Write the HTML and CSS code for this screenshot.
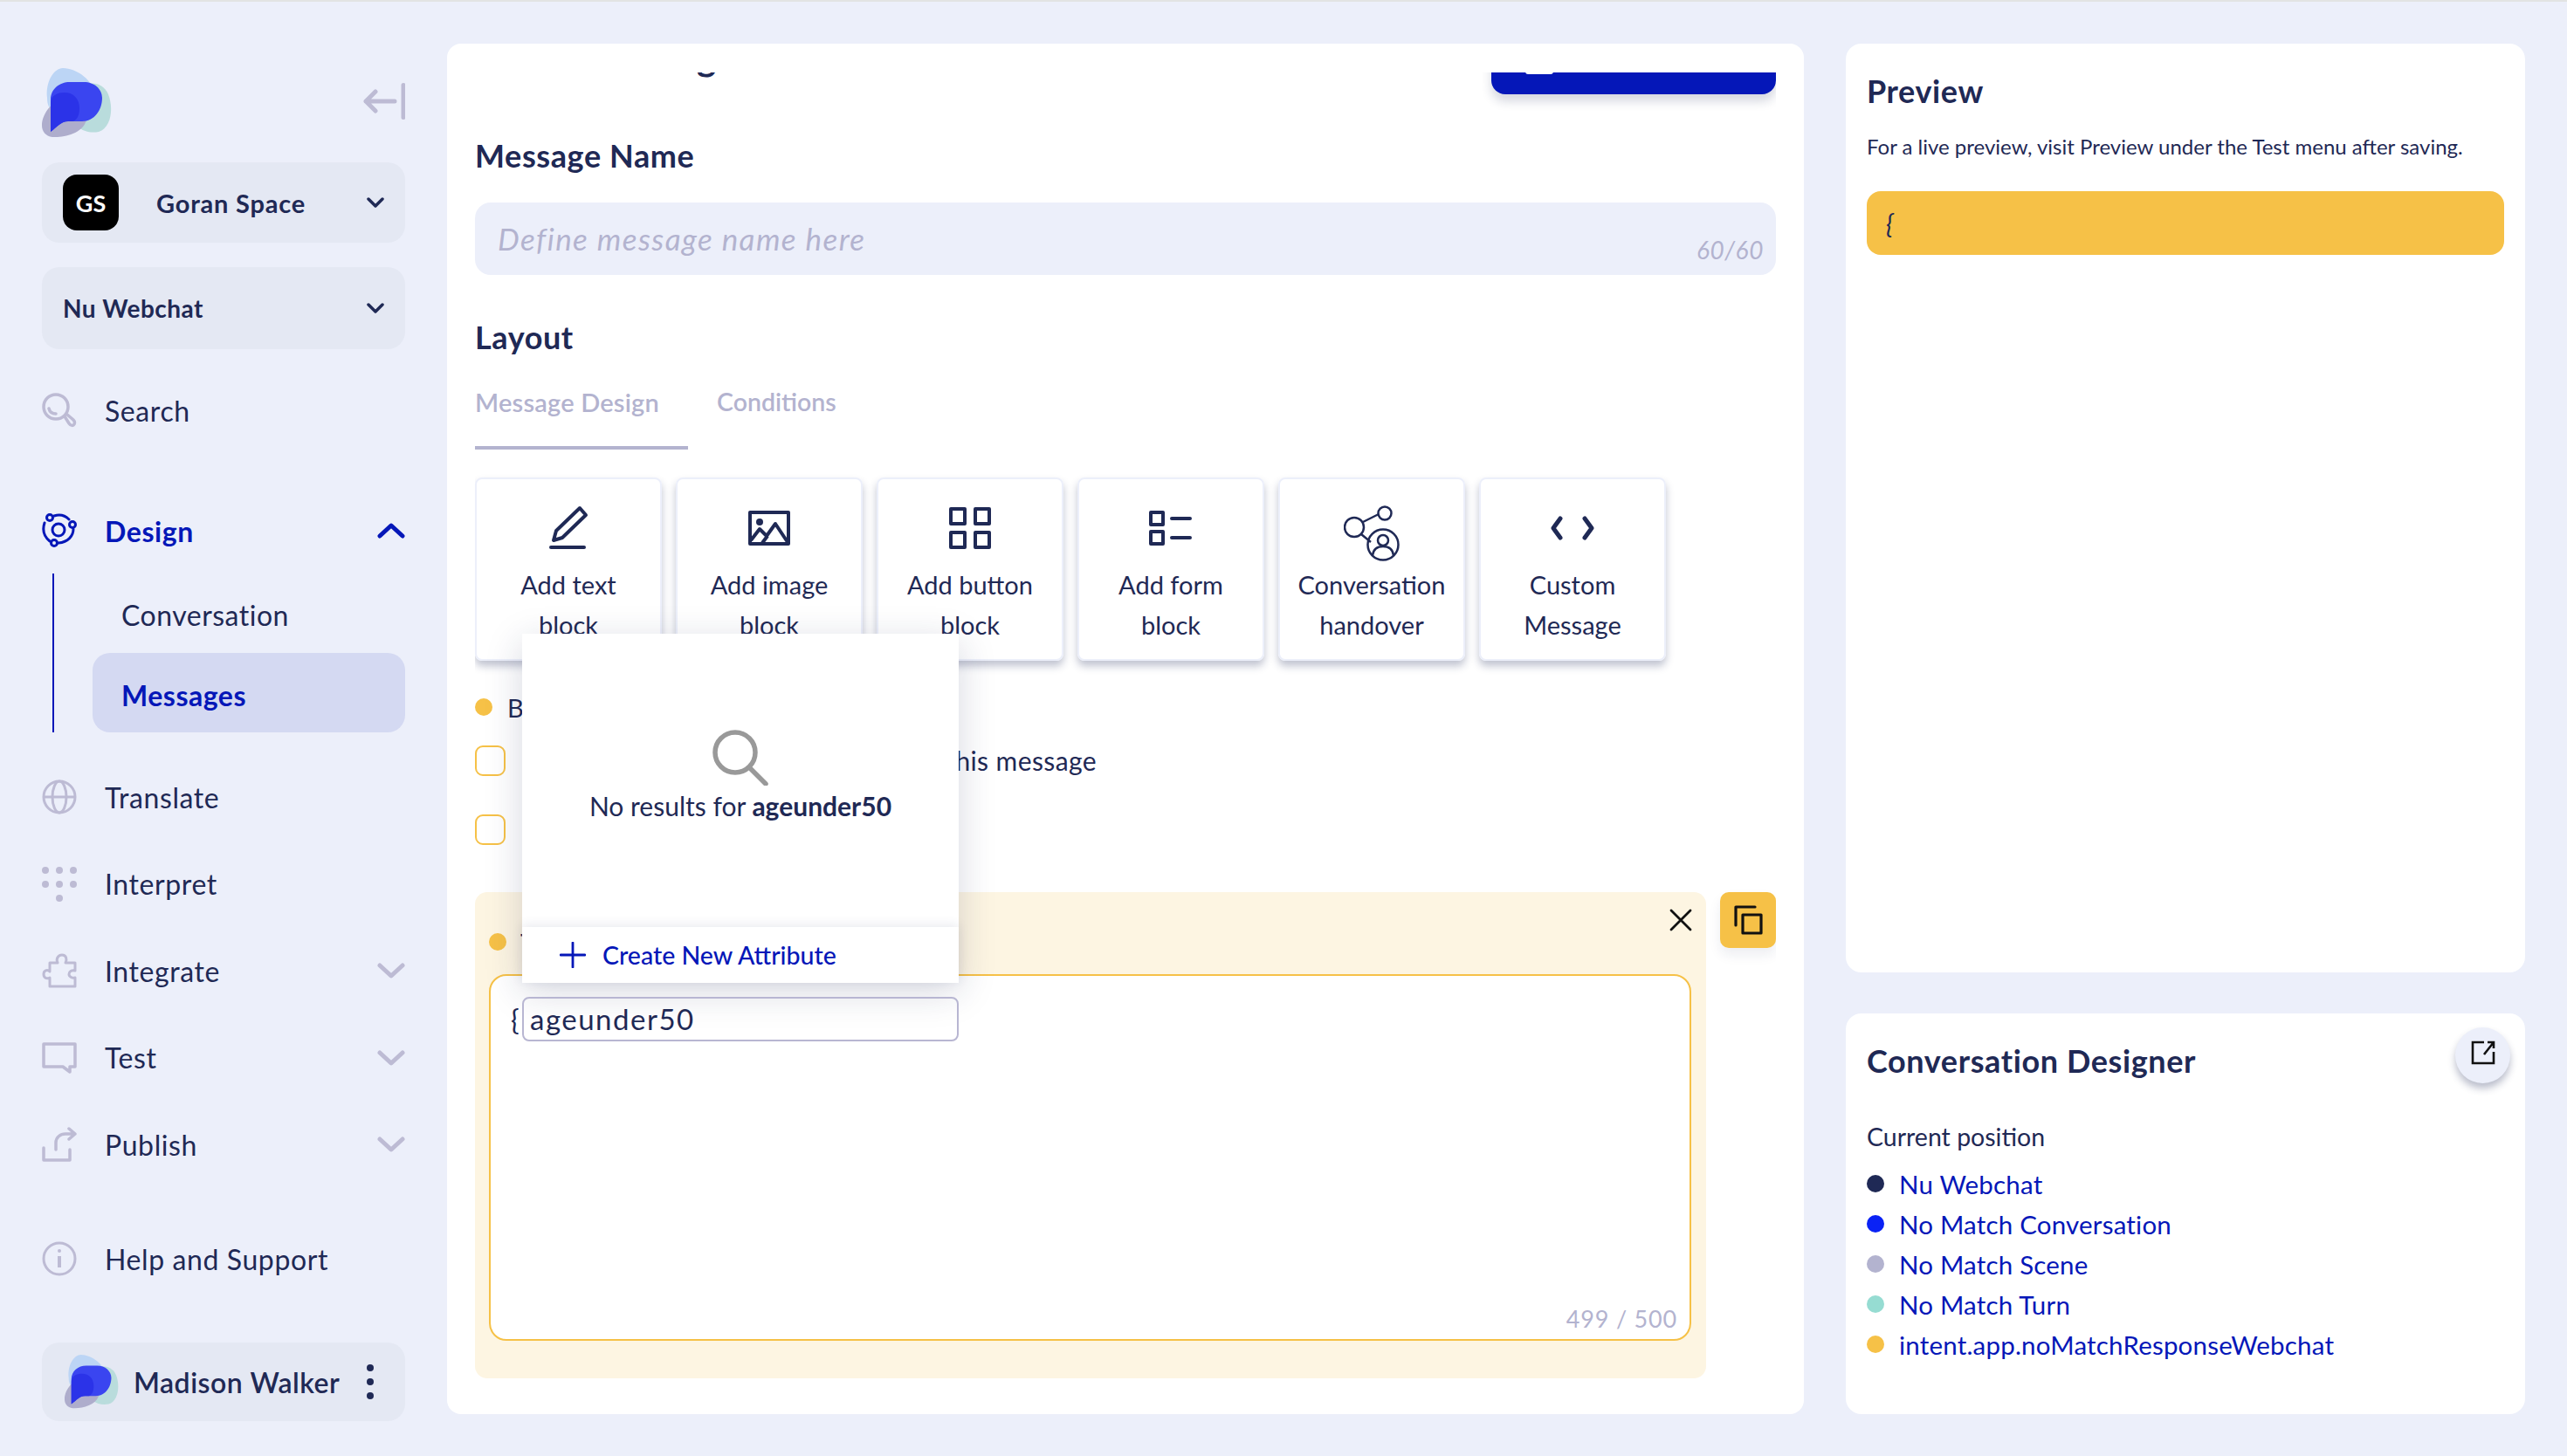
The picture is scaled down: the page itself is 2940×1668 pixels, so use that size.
FILE: index.html
```html
<!DOCTYPE html>
<html lang="en">
<head>
    <meta charset="UTF-8">
    <meta name="viewport" content="width=device-width, initial-scale=1.0">
    <title>Messages</title>
    <link rel="stylesheet" href="styles.css">
</head>
<body>
    <svg class="defs" width="0" height="0">
        <symbol id="logo" viewBox="0 0 80 80">
            <path fill="#bcd5f5" d="M6 34C4 15 14 0 24 0 40 0 60 15 60 30 60 48 30 55 15 50 8 47 6 42 6 34Z"/>
            <path fill="#b9dcdc" d="M40 20C55 15 70 16 76 30 82 45 80 68 65 73 50 76 35 68 32 50Z"/>
            <path fill="#aeadcc" d="M0 66C0 50 15 35 30 33 48 30 55 50 50 62 45 75 25 80 12 79 4 78 0 72 0 66Z"/>
            <path fill="#3a45f0" d="M10 73V36C10 24 20 16 32 16H48C60 16 69 24 69 34 69 48 60 61 46 61H30C22 61 18 67 10 73Z"/>
            <path fill="#2b33e8" d="M10 73V40C10 31 18 28 26 28 36 28 43 35 43 46 43 54 40 61 34 61H30C22 61 18 67 10 73Z"/>
        </symbol>
    </svg>

    <aside class="sidebar">
        <div class="brand">
            <svg class="brand-logo"><use href="#logo"/></svg>
            <svg class="collapse" viewBox="0 0 48 42" fill="none" stroke="#bdbbd4" stroke-width="5" stroke-linecap="round" stroke-linejoin="round">
                <path d="M46 2.500V39.500M36 21H3M14 10 3 21 14 32"/>
            </svg>
        </div>

        <div class="pill pill-space">
            <span class="avatar-gs">GS</span>
            <span class="pill-text">Goran Space</span>
            <svg class="pill-chevron" viewBox="0 0 20 12" fill="none" stroke="#1f2955" stroke-width="3.500" stroke-linecap="round" stroke-linejoin="round"><path d="M2 2l8 8 8-8"/></svg>
        </div>

        <div class="pill pill-project">
            <span class="pill-text">Nu Webchat</span>
            <svg class="pill-chevron" viewBox="0 0 20 12" fill="none" stroke="#1f2955" stroke-width="3.500" stroke-linecap="round" stroke-linejoin="round"><path d="M2 2l8 8 8-8"/></svg>
        </div>

        <div class="nav-row nav-search">
            <svg class="nav-icon" viewBox="0 0 40 40" fill="none" stroke="#bdbbd4" stroke-width="3.500" stroke-linecap="round">
                <circle cx="16" cy="16" r="14"/><path d="M8 18c1 4 4 6 8 6"/><path d="M26 27l5 8c2 3 5 3 6 1s1-3-1-5l-7-6"/>
            </svg>
            <span>Search</span>
        </div>

        <div class="nav-row nav-design">
            <svg class="nav-icon" viewBox="0 0 40 40" fill="none" stroke="#0517b8" stroke-width="3" stroke-linecap="round">
                <circle cx="19" cy="19" r="7"/><circle cx="9" cy="5" r="3.500"/><circle cx="35" cy="13" r="3.500"/><circle cx="14" cy="34" r="3.500"/>
                <path d="M14 3c6-2 12-1 17 4M36 18c0 8-6 15-17 16M9 32C3 27 0 20 3 11"/>
            </svg>
            <span>Design</span>
            <svg class="nav-chevron" viewBox="0 0 32 18" fill="none" stroke="#0517b8" stroke-width="5" stroke-linecap="round" stroke-linejoin="round"><path d="M3 15 16 3l13 12"/></svg>
        </div>

        <div class="subnav">
            <div class="subnav-item">Conversation</div>
            <div class="subnav-item subnav-active">Messages</div>
        </div>

        <div class="nav-group">
            <div class="nav-row">
                <svg class="nav-icon" viewBox="0 0 40 40" fill="none" stroke="#bdbbd4" stroke-width="3">
                    <circle cx="20" cy="20" r="18"/><ellipse cx="20" cy="20" rx="8" ry="18"/><path d="M2 20h36"/>
                </svg>
                <span>Translate</span>
            </div>
            <div class="nav-row">
                <svg class="nav-icon" viewBox="0 0 40 40" fill="#bdbbd4">
                    <circle cx="4" cy="4" r="4"/><circle cx="20" cy="4" r="4"/><circle cx="36" cy="4" r="4"/>
                    <circle cx="4" cy="20" r="4"/><circle cx="20" cy="20" r="4"/><circle cx="36" cy="20" r="4"/>
                    <circle cx="20" cy="36" r="4"/>
                </svg>
                <span>Interpret</span>
            </div>
            <div class="nav-row">
                <svg class="nav-icon" viewBox="0 0 40 40" fill="none" stroke="#bdbbd4" stroke-width="3" stroke-linejoin="round">
                    <path d="M9 38V28C5 30 2 28 2 24s4-6 7-3V11h9c-2-4 0-9 5-9s6 5 4 9h11v9c-4-1-7 1-7 4s4 5 7 4v10Z"/>
                </svg>
                <span>Integrate</span>
                <svg class="nav-chevron" viewBox="0 0 32 18" fill="none" stroke="#bdbbd4" stroke-width="5" stroke-linecap="round" stroke-linejoin="round"><path d="M3 3l13 12L29 3"/></svg>
            </div>
            <div class="nav-row">
                <svg class="nav-icon" viewBox="0 0 40 36" fill="none" stroke="#bdbbd4" stroke-width="3.500" stroke-linejoin="round">
                    <path d="M2 2h36v26h-6v6l-8-6H2Z"/>
                </svg>
                <span>Test</span>
                <svg class="nav-chevron" viewBox="0 0 32 18" fill="none" stroke="#bdbbd4" stroke-width="5" stroke-linecap="round" stroke-linejoin="round"><path d="M3 3l13 12L29 3"/></svg>
            </div>
            <div class="nav-row">
                <svg class="nav-icon" viewBox="0 0 40 40" fill="none" stroke="#bdbbd4" stroke-width="3.500" stroke-linecap="round" stroke-linejoin="round">
                    <path d="M2 24v14h30v-12M16 26V18c0-6 5-10 11-10h10M31 2l7 6-7 6"/>
                </svg>
                <span>Publish</span>
                <svg class="nav-chevron" viewBox="0 0 32 18" fill="none" stroke="#bdbbd4" stroke-width="5" stroke-linecap="round" stroke-linejoin="round"><path d="M3 3l13 12L29 3"/></svg>
            </div>
        </div>

        <div class="nav-row nav-help">
            <svg class="nav-icon" viewBox="0 0 40 40" fill="none" stroke="#bdbbd4" stroke-width="3">
                <circle cx="20" cy="20" r="18"/><path d="M20 17v13" stroke-width="4"/><circle cx="20" cy="11" r="2" fill="#bdbbd4" stroke="none"/>
            </svg>
            <span>Help and Support</span>
        </div>

        <div class="pill pill-user">
            <svg class="user-logo"><use href="#logo"/></svg>
            <span class="user-name">Madison Walker</span>
            <span class="kebab"><i></i><i></i><i></i></span>
        </div>
    </aside>

    <main class="editor">
        <div class="editor-scroll">
            <div class="editor-head">
                <h1>Create Message</h1>
                <button class="save-button">
                    <svg viewBox="0 0 32 32" fill="#fff"><rect width="32" height="32" rx="3"/></svg>
                    <span>Save Message</span>
                </button>
            </div>

            <h2 class="section-title">Message Name</h2>
            <div class="name-input">
                <span class="name-placeholder">Define message name here</span>
                <span class="name-count">60/60</span>
            </div>

            <h2 class="section-title layout-title">Layout</h2>
            <div class="tabs">
                <div class="tab tab-active">Message Design</div>
                <div class="tab">Conditions</div>
            </div>

            <div class="blocks">
                <div class="block">
                    <svg class="block-icon" viewBox="0 0 60 64" fill="none" stroke="#1f2955" stroke-width="4" stroke-linecap="round" stroke-linejoin="round">
                        <path d="M13 40l3-11L43 3l7 8-27 26Z"/><path d="M10 48h38"/>
                    </svg>
                    <div>Add text<br>block</div>
                </div>
                <div class="block">
                    <svg class="block-icon" viewBox="0 0 60 64" fill="none" stroke="#1f2955" stroke-width="4" stroke-linejoin="round">
                        <rect x="8" y="8" width="44" height="36"/><circle cx="19" cy="19" r="4" fill="#1f2955" stroke="none"/><path d="M9 40 19 27l8 8 10-14 14 21M22 43l6-8"/>
                    </svg>
                    <div>Add image<br>block</div>
                </div>
                <div class="block">
                    <svg class="block-icon" viewBox="0 0 60 64" fill="none" stroke="#1f2955" stroke-width="4" stroke-linejoin="round">
                        <rect x="8" y="4" width="16" height="17"/><rect x="36" y="4" width="16" height="17"/><rect x="8" y="31" width="16" height="17"/><rect x="36" y="31" width="16" height="17"/>
                    </svg>
                    <div>Add button<br>block</div>
                </div>
                <div class="block">
                    <svg class="block-icon" viewBox="0 0 60 64" fill="none" stroke="#1f2955" stroke-width="4" stroke-linecap="round" stroke-linejoin="round">
                        <rect x="7" y="8" width="14" height="14"/><rect x="7" y="30" width="14" height="14"/><path d="M31 15h21M31 37h21"/>
                    </svg>
                    <div>Add form<br>block</div>
                </div>
                <div class="block">
                    <svg class="block-icon icon-handover" viewBox="0 0 64 64" fill="none" stroke="#1f2955" stroke-width="2.500">
                        <circle cx="12" cy="25" r="11"/><circle cx="47" cy="9" r="7.500"/><circle cx="45" cy="45" r="17.500"/>
                        <path d="M22 19l18-9M20 33l11 9"/><circle cx="45" cy="40" r="6"/><path d="M33 57c1-7 6-10 12-10s11 3 12 10"/>
                    </svg>
                    <div>Conversation<br>handover</div>
                </div>
                <div class="block">
                    <svg class="block-icon" viewBox="0 0 60 64" fill="none" stroke="#1f2955" stroke-width="5" stroke-linecap="round" stroke-linejoin="round">
                        <path d="M16 15 8 26l8 11M44 15l8 11-8 11"/>
                    </svg>
                    <div>Custom<br>Message</div>
                </div>
            </div>

            <div class="option-title"><span class="dot dot-yellow"></span>Behavior</div>
            <div class="option-row">
                <span class="checkbox"></span>
                <span class="option-label">Do not send the response of this message</span>
            </div>
            <div class="option-row option-row-second">
                <span class="checkbox"></span>
            </div>

            <div class="text-row">
                <div class="text-panel">
                    <div class="text-panel-head">
                        <span class="dot dot-yellow"></span>
                        <span class="text-panel-title">Text</span>
                        <svg class="close-icon" viewBox="0 0 26 26" fill="none" stroke="#111" stroke-width="2.800" stroke-linecap="round"><path d="M2 2l22 22M24 2 2 24"/></svg>
                    </div>
                    <div class="text-area">
                        <div class="text-value">{</div>
                        <div class="text-count">499 / 500</div>
                    </div>
                </div>
                <button class="copy-button">
                    <svg viewBox="0 0 34 34" fill="none" stroke="#111" stroke-width="3.200" stroke-linejoin="round" stroke-linecap="round">
                        <path d="M3 23V2h22"/><rect x="11" y="11" width="21" height="21"/>
                    </svg>
                </button>
            </div>
        </div>

        <div class="picker">
            <div class="picker-menu">
                <div class="picker-empty">
                    <svg class="picker-search" viewBox="0 0 64 64" fill="none" stroke="#999" stroke-width="5.500" stroke-linecap="round">
                        <circle cx="26" cy="26" r="23"/><path d="M43 44l18 18"/>
                    </svg>
                    <div>No results for <b>ageunder50</b></div>
                </div>
                <div class="picker-create">
                    <svg viewBox="0 0 30 30" fill="none" stroke="#0517b8" stroke-width="2.800" stroke-linecap="round"><path d="M15 1v28M1 15h28"/></svg>
                    <span>Create New Attribute</span>
                </div>
            </div>
            <div class="picker-input">ageunder50</div>
        </div>
    </main>

    <div class="side-column">
        <section class="side-card preview-card">
            <h2 class="side-title">Preview</h2>
            <p class="preview-note">For a live preview, visit Preview under the Test menu after saving.</p>
            <div class="preview-bubble">{</div>
        </section>

        <section class="side-card designer-card">
            <h2 class="side-title">Conversation Designer</h2>
            <button class="open-button">
                <svg viewBox="0 0 28 28" fill="none" stroke="#111" stroke-width="2.600"><path d="M15 2H2v24h24V13"/><path d="M26 2 15 16M19 2h7v7"/></svg>
            </button>
            <div class="position-label">Current position</div>
            <ul class="position-list">
                <li><span class="dot dot-navy"></span>Nu Webchat</li>
                <li><span class="dot dot-blue"></span>No Match Conversation</li>
                <li><span class="dot dot-grey"></span>No Match Scene</li>
                <li><span class="dot dot-teal"></span>No Match Turn</li>
                <li><span class="dot dot-yellow"></span>intent.app.noMatchResponseWebchat</li>
            </ul>
        </section>
    </div>
</body>
</html>
```

FILE: styles.css
```css
* {
    box-sizing: border-box;
}

html, body {
    margin: 0;
    padding: 0;
}

body {
    display: flex;
    width: 2940px;
    height: 1668px;
    overflow: hidden;
    border-top: 2px solid #e2e3e3;
    background-color: #eceffa;
    font-family: "Lato", "Noto Sans", sans-serif;
    color: #1f2955;
}

.defs {
    position: absolute;
}

/* sidebar */
.sidebar {
    flex: none;
    width: 512px;
    padding: 76px 48px 0;
}

.brand {
    display: flex;
    justify-content: space-between;
    align-items: center;
    height: 79px;
}

.brand-logo {
    width: 80px;
    height: 80px;
}

.collapse {
    width: 48px;
    height: 42px;
    margin-top: -3px;
}

.pill {
    display: flex;
    align-items: center;
    background: #e4e8f3;
    border-radius: 20px;
}

.pill-space {
    height: 92px;
    margin-top: 29px;
    padding: 0 24px;
}

.pill-project {
    height: 94px;
    margin-top: 28px;
    padding: 0 24px;
}

.avatar-gs {
    display: flex;
    align-items: center;
    justify-content: center;
    width: 64px;
    height: 64px;
    margin-right: 43px;
    background: #000;
    border-radius: 16px;
    color: #fff;
    font-size: 27px;
    font-weight: 700;
}

.pill-text {
    flex: 1;
    font-size: 28px;
    font-weight: 700;
    letter-spacing: 0.5px;
}

.pill-space .pill-text {
    font-size: 29px;
    letter-spacing: 0.8px;
}

.pill-chevron {
    width: 20px;
    height: 12px;
}

.nav-row {
    display: flex;
    align-items: center;
    height: 60px;
    font-size: 32px;
    letter-spacing: 0.6px;
}

.nav-icon {
    flex: none;
    width: 40px;
    height: 40px;
    margin-right: 32px;
}

.nav-row span {
    flex: 1;
}

.nav-chevron {
    width: 32px;
    height: 18px;
}

.nav-search {
    margin-top: 40px;
}

.nav-design {
    margin-top: 78px;
    color: #0517b8;
    font-weight: 700;
}

.subnav {
    margin: 19px 0 0 12px;
    padding-left: 44px;
    border-left: 2px solid #0517b8;
}

.subnav-item {
    height: 91px;
    padding: 28px 0 0 33px;
    font-size: 32px;
    letter-spacing: 0.5px;
}

.subnav-active {
    padding-top: 29px;
    background: #d4d9f2;
    border-radius: 20px;
    color: #0517b8;
    font-weight: 700;
}

.nav-group {
    display: flex;
    flex-direction: column;
    gap: 39.5px;
    margin-top: 44px;
}

.nav-help {
    margin-top: 71px;
}

.pill-user {
    height: 90px;
    margin-top: 66px;
    padding: 0 26px;
}

.user-logo {
    flex: none;
    width: 62px;
    height: 62px;
    margin-right: 17px;
}

.user-name {
    flex: 1;
    font-size: 32px;
    font-weight: 600;
    letter-spacing: 0.5px;
}

.kebab {
    display: flex;
    flex-direction: column;
    gap: 8px;
    margin-right: 10px;
}

.kebab i {
    width: 8px;
    height: 8px;
    background: #1f2955;
    border-radius: 50%;
}

/* main card */
.editor {
    position: relative;
    flex: none;
    width: 1554px;
    height: 1570px;
    margin-top: 48px;
    padding: 33px 32px 0;
    background: #fff;
    border-radius: 16px;
}

.editor-scroll {
    height: 1537px;
    overflow: hidden;
}

.editor-head {
    display: flex;
    justify-content: space-between;
    align-items: flex-start;
    height: 64px;
    margin-top: -39px;
}

.editor-head h1 {
    margin: 0;
    font-size: 42px;
    line-height: 42px;
}

.save-button {
    display: flex;
    align-items: flex-start;
    gap: 11px;
    width: 326px;
    height: 64px;
    padding: 9px 0 0 39px;
    border: none;
    border-radius: 16px;
    background: #0517b8;
    color: #fff;
    font-family: inherit;
    font-size: 34px;
    line-height: 40px;
    box-shadow: 0 8px 12px rgba(30, 40, 85, 0.18);
}

.save-button svg {
    width: 32px;
    height: 32px;
}

.save-button span {
    margin-top: -10px;
}

.section-title {
    margin: 50px 0 0;
    height: 40px;
    font-size: 36px;
    line-height: 40px;
    letter-spacing: 0.6px;
}

.name-input {
    display: flex;
    justify-content: space-between;
    height: 83px;
    margin-top: 34px;
    padding: 0 14px 0 26px;
    background: #eceffa;
    border-radius: 18px;
    color: #b3b3cf;
    font-style: italic;
}

.name-placeholder {
    align-self: center;
    padding-bottom: 2px;
    font-size: 35px;
    letter-spacing: 1.4px;
}

.name-count {
    align-self: flex-end;
    padding-bottom: 12px;
    font-size: 28px;
    letter-spacing: 0.6px;
}

.layout-title {
    margin-top: 51px;
}

.tabs {
    display: flex;
    gap: 33px;
    margin-top: 34px;
}

.tab {
    height: 75px;
    padding-top: 3px;
    color: #b3b3cf;
    font-size: 28.5px;
    font-weight: 600;
}

.tab-active {
    width: 244px;
    border-bottom: 4px solid #b3b3cf;
    font-size: 29px;
    letter-spacing: 0.2px;
}

.blocks {
    display: flex;
    gap: 16px;
    margin-top: 32px;
}

.block {
    width: 214px;
    height: 210px;
    padding-top: 30px;
    border: 2px solid #eceffa;
    border-radius: 8px;
    box-shadow: 0 6px 10px rgba(30, 40, 85, 0.28);
    font-size: 29px;
    line-height: 46px;
    text-align: center;
}

.block-icon {
    display: block;
    width: 60px;
    height: 64px;
    margin: 0 auto 4px;
}

.icon-handover {
    width: 64px;
}

.dot {
    display: inline-block;
    flex: none;
    width: 20px;
    height: 20px;
    border-radius: 50%;
}

.dot-yellow {
    background: #f6c147;
}

.dot-navy {
    background: #1f2955;
}

.dot-blue {
    background: #0a22f5;
}

.dot-grey {
    background: #b3b3cf;
}

.dot-teal {
    background: #96dcd2;
}

.option-title {
    display: flex;
    align-items: center;
    gap: 17px;
    margin-top: 33px;
    height: 40px;
    font-size: 29px;
}

.option-row {
    display: flex;
    align-items: center;
    gap: 36px;
    height: 36px;
    margin-top: 23px;
}

.option-row-second {
    margin-top: 43px;
}

.checkbox {
    flex: none;
    width: 35px;
    height: 35px;
    border: 2px solid #f6c147;
    border-radius: 9px;
}

.option-label {
    width: 641px;
    font-size: 30px;
    letter-spacing: 0.4px;
    text-align: right;
}

.text-row {
    display: flex;
    gap: 16px;
    margin-top: 54px;
}

.text-panel {
    width: 1410px;
    height: 557px;
    padding: 0 17px 43px 16px;
    background: #fdf5e2;
    border-radius: 14px;
}

.text-panel-head {
    display: flex;
    align-items: flex-start;
    height: 94px;
    padding-top: 47px;
}

.text-panel-title {
    flex: 1;
    margin: -7px 0 0 16px;
    font-size: 29px;
}

.close-icon {
    width: 26px;
    height: 26px;
    margin: -28px -1px 0 0;
}

.text-area {
    display: flex;
    flex-direction: column;
    justify-content: space-between;
    height: 420px;
    padding: 30px 14px 7px 23px;
    background: #fff;
    border: 2px solid #f6c147;
    border-radius: 20px;
}

.text-value {
    font-size: 32px;
}

.text-count {
    align-self: flex-end;
    color: #b3b3cf;
    font-size: 27px;
    letter-spacing: 0.8px;
}

.copy-button {
    display: flex;
    align-items: center;
    justify-content: center;
    width: 64px;
    height: 64px;
    padding: 0;
    border: none;
    border-radius: 10px;
    background: #f6c147;
    box-shadow: 0 8px 14px rgba(30, 40, 85, 0.08);
}

.copy-button svg {
    width: 34px;
    height: 34px;
}

/* attribute picker sits on top of the editor */
.picker {
    position: absolute;
    left: 86px;
    top: 676px;
    width: 500px;
}

.picker-menu {
    height: 400px;
    background: #fff;
    box-shadow: 0 10px 40px rgba(30, 40, 85, 0.18);
}

.picker-empty {
    display: flex;
    flex-direction: column;
    align-items: center;
    height: 336px;
    padding-top: 110px;
    font-size: 30px;
}

.picker-search {
    width: 64px;
    height: 64px;
    margin-bottom: 5px;
}

.picker-create {
    display: flex;
    align-items: center;
    gap: 19px;
    height: 64px;
    padding-left: 43px;
    background: #fff;
    box-shadow: 0 -2px 12px rgba(30, 40, 85, 0.1);
    color: #0517b8;
    font-size: 28.5px;
    font-weight: 500;
}

.picker-create svg {
    width: 30px;
    height: 30px;
}

.picker-input {
    height: 51px;
    margin-top: 16px;
    padding: 0 7px;
    border: 2px solid #b8b6d2;
    border-radius: 8px;
    font-size: 33px;
    line-height: 47px;
    letter-spacing: 1.5px;
}

/* right column */
.side-column {
    flex: none;
    display: flex;
    flex-direction: column;
    gap: 47px;
    width: 778px;
    margin: 48px 0 0 48px;
}

.side-card {
    position: relative;
    padding: 0 24px;
    background: #fff;
    border-radius: 18px;
}

.preview-card {
    height: 1064px;
}

.designer-card {
    height: 459px;
}

.side-title {
    margin: 0;
    padding-top: 33px;
    font-size: 36px;
    line-height: 42px;
    letter-spacing: 0.6px;
}

.preview-note {
    margin: 28px 0 0;
    font-size: 24px;
    line-height: 30px;
}

.preview-bubble {
    height: 73px;
    margin-top: 36px;
    padding-left: 22px;
    background: #f6c147;
    border-radius: 16px;
    font-size: 30px;
    font-style: italic;
    line-height: 75px;
}

.open-button {
    position: absolute;
    top: 16px;
    right: 17px;
    display: flex;
    align-items: center;
    justify-content: center;
    width: 63px;
    height: 64px;
    padding: 0 0 6px;
    border: none;
    border-radius: 50%;
    background: #eceffa;
    box-shadow: 0 6px 8px rgba(30, 40, 85, 0.3);
}

.open-button svg {
    width: 28px;
    height: 28px;
}

.position-label {
    margin-top: 48px;
    font-size: 28.5px;
    line-height: 36px;
}

.position-list {
    margin: 13px 0 0;
    padding: 0;
    list-style: none;
}

.position-list li {
    display: flex;
    align-items: center;
    gap: 17px;
    height: 46px;
    color: #0517b8;
    font-size: 29.5px;
    letter-spacing: 0.2px;
}
```
